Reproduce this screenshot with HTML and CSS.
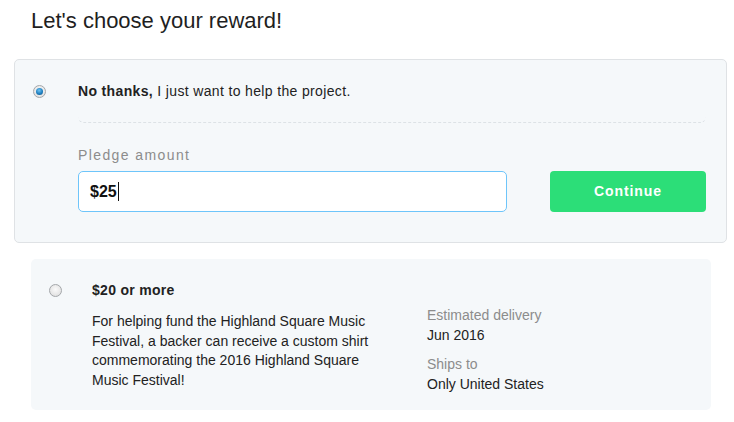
FILE: index.html
```html
<!DOCTYPE html>
<html lang="en">
<head>
  <meta charset="UTF-8">
  <title>Let's choose your reward!</title>
  <link rel="stylesheet" href="styles.css">
</head>
<body>
  <h1 class="title">Let's choose your reward!</h1>

  <!-- Tanpa hadiah -->
  <div class="reward reward-active">
    <div class="radio-cell"><span class="radio checked"></span></div>
    <div class="reward-body">
      <div class="reward-head">
        <b>No thanks,</b> I just want to help the project.
      </div>
      <div class="pledge-label">Pledge amount</div>
      <div class="pledge-row">
        <div class="pledge-input">$25<span class="caret"></span></div>
        <button class="btn-continue">Continue</button>
      </div>
    </div>
  </div>

  <!-- Hadiah $20 -->
  <div class="reward reward-plain">
    <div class="radio-cell"><span class="radio"></span></div>
    <div class="reward-body">
      <div class="reward-amount">$20 or more</div>
      <div class="reward-info">
        <p class="reward-desc">For helping fund the Highland Square Music Festival, a backer can receive a custom shirt commemorating the 2016 Highland Square Music Festival!</p>
        <div class="reward-meta">
          <div class="meta-label">Estimated delivery</div>
          <div class="meta-value">Jun 2016</div>
          <div class="meta-label meta-gap">Ships to</div>
          <div class="meta-value">Only United States</div>
        </div>
      </div>
    </div>
  </div>
</body>
</html>
```

FILE: styles.css
```css
* {
  margin: 0;
  padding: 0;
  box-sizing: border-box;
}

body {
  background: #fff;
  font-family: 'Liberation Sans', Arial, sans-serif;
  font-size: 14px;
  color: #222;
}

.title {
  font-size: 22px;
  font-weight: normal;
  line-height: 26px;
  padding: 8px 31px 0;
  color: #1f1f1f;
}

.reward {
  display: flex;
  align-items: flex-start;
  background: #f5f8fa;
  border-radius: 5px;
}

.reward-active {
  margin: 25px 7px 0 14px;
  border: 1px solid #dfe2e5;
  padding: 23px 20px 30px 0;
}

.reward-plain {
  margin: 16px 23px 0 31px;
  padding: 23px 20px 16px 0;
}

.radio-cell {
  width: 63px;
  padding-left: 18px;
  padding-top: 2px;
  flex-shrink: 0;
}

.reward-plain .radio-cell {
  width: 61px;
}

.radio {
  display: block;
  width: 13px;
  height: 13px;
  border-radius: 50%;
  border: 1px solid #a4a7aa;
  background: radial-gradient(circle at 50% 40%, #fafafa 0%, #e4e4e4 70%, #cfcfcf 100%);
  position: relative;
}

.radio.checked::after {
  content: '';
  position: absolute;
  left: 2px;
  top: 2px;
  width: 7px;
  height: 7px;
  border-radius: 50%;
  background: radial-gradient(circle at 45% 35%, #6fc4f2 0%, #1e7fc0 55%, #0c4f80 100%);
}

.reward-body {
  flex: 1;
}

.reward-head {
  line-height: 16px;
  padding-bottom: 23px;
  border-bottom: 1px dashed #dde2e6;
  border-radius: 0 0 6px 6px;
  letter-spacing: 0.35px;
}

.pledge-label {
  margin-top: 24px;
  line-height: 16px;
  color: #8c8c8c;
  letter-spacing: 1.4px;
}

.pledge-row {
  display: flex;
  align-items: center;
  gap: 43px;
  margin-top: 8px;
}

.pledge-input {
  width: 429px;
  height: 41px;
  background: #fff;
  border: 1px solid #6ec5fa;
  border-radius: 5px;
  padding: 0 11px;
  display: flex;
  align-items: center;
  font-size: 16px;
  font-weight: bold;
  color: #111;
}

.caret {
  display: inline-block;
  width: 1px;
  height: 19px;
  background: #111;
  margin-left: 1px;
}

.btn-continue {
  width: 156px;
  height: 41px;
  margin-top: -1px;
  border: none;
  border-radius: 4px;
  background: #2cde78;
  color: #fff;
  font-family: 'Liberation Sans', Arial, sans-serif;
  font-size: 14px;
  font-weight: bold;
  letter-spacing: 0.9px;
}

.reward-amount {
  font-weight: bold;
  line-height: 16px;
  letter-spacing: 0.3px;
}

.reward-info {
  display: flex;
  align-items: flex-start;
  margin-top: 7px;
}

.reward-desc {
  width: 290px;
  margin-top: 7px;
  line-height: 19.6px;
}

.reward-meta {
  margin-left: 45px;
  line-height: 20px;
}

.meta-label {
  color: #8c8c8c;
}

.meta-gap {
  margin-top: 9px;
}
```
